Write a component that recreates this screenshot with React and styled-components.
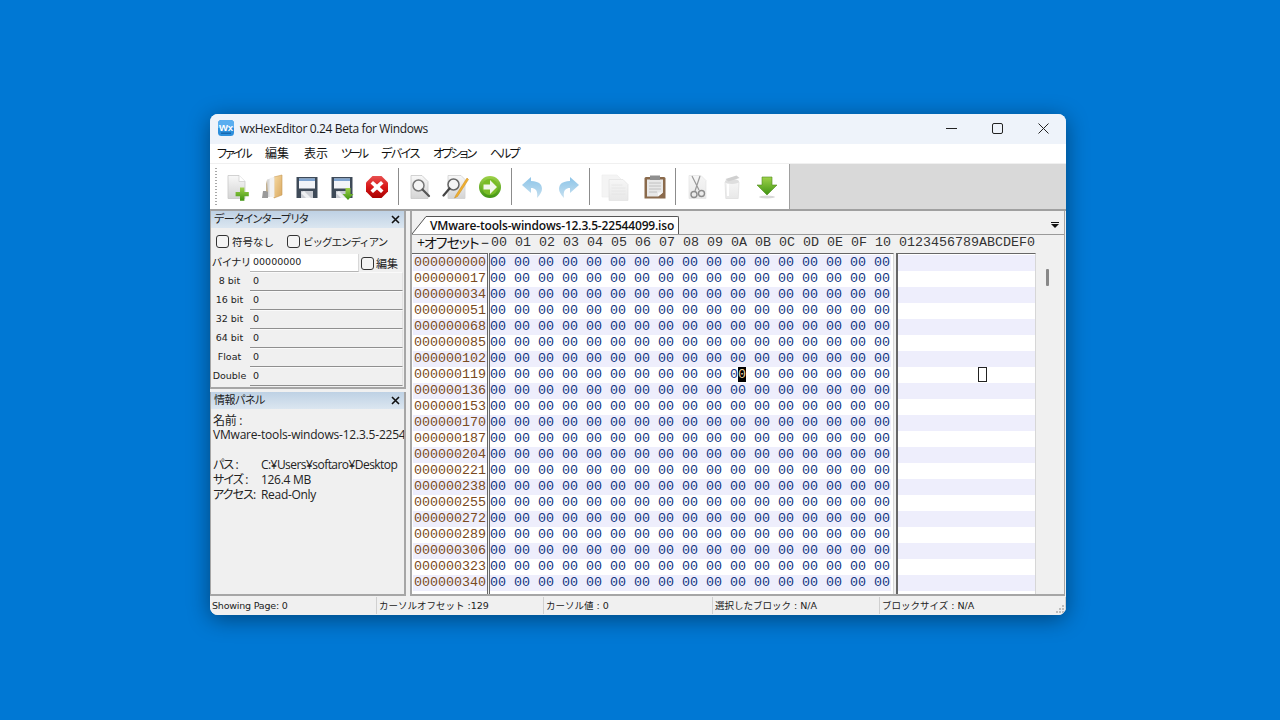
import React from "react";
import styled, { createGlobalStyle } from "styled-components";

const UI_FONT = `"Open Sans", "Noto Sans CJK JP", sans-serif`;
const SMALL_FONT = `"DejaVu Sans", "Noto Sans CJK JP", sans-serif`;
const HEX_FONT = `"Liberation Mono", monospace`;

const GlobalStyle = createGlobalStyle`
  html, body {
    margin: 0;
    height: 100%;
    background: #0078d4;
  }
  * {
    box-sizing: border-box;
  }
`;

const Page = styled.div`
  width: 1280px;
  height: 720px;
  padding: 114px 0 0 210px;
  overflow: hidden;
  background: #0078d4;
  font-family: ${UI_FONT};
  font-feature-settings: "palt";
`;

const Window = styled.div`
  width: 856px;
  height: 501px;
  display: flex;
  flex-direction: column;
  border-radius: 8px;
  overflow: hidden;
  background: #f0f0f0;
  box-shadow: 0 4px 22px rgba(0, 0, 0, 0.42);
`;

const TitleBar = styled.div`
  height: 30px;
  flex: none;
  display: flex;
  align-items: center;
  padding: 0 0 2px 8px;
  background: #eef3fa;
  color: #1a1a1a;
  font-size: 12px;
`;

const TitleText = styled.span`
  margin-left: 6px;
  flex: 1;
  letter-spacing: -0.36px;
`;

const CaptionButton = styled.div`
  width: 46px;
  height: 28px;
  display: flex;
  align-items: center;
  justify-content: center;
`;

const MenuBar = styled.div`
  height: 19px;
  flex: none;
  display: flex;
  align-items: center;
  padding: 0 0 2px 7px;
  background: #fff;
  color: #111;
  font-size: 12px;
`;

const MenuItem = styled.span`
  width: ${(p) => p.$width}px;
  flex: none;
  letter-spacing: ${(p) => p.$track}px;
  white-space: nowrap;
`;

const ToolArea = styled.div`
  height: 48px;
  flex: none;
  display: flex;
  background: #d9d9d9;
  border-top: 1px solid #f0f0f0;
  border-bottom: 2px solid #a0a0a0;
`;

const Toolbar = styled.div`
  width: 580px;
  display: flex;
  align-items: center;
  padding-left: 4px;
  background: #fff;
  border-right: 1px solid #a0a0a0;
`;

const Gripper = styled.div`
  width: 2px;
  height: 38px;
  margin: 0 2px 0 1px;
  background-image: linear-gradient(#a8a8a8 50%, transparent 50%);
  background-size: 2px 3px;
`;

const ToolSlot = styled.div`
  width: 35px;
  height: 28px;
  flex: none;
  margin-left: ${(p) => p.$left ?? 0}px;
  display: flex;
  align-items: center;
  justify-content: center;
  svg {
    filter: blur(0.3px);
  }
`;

const ToolSep = styled.div`
  width: 1px;
  height: 37px;
  margin: 0 ${(p) => p.$right ?? 3}px 0 ${(p) => p.$before ?? 4}px;
  flex: none;
  background: #8c8c8c;
`;

const Main = styled.div`
  flex: 1;
  min-height: 0;
  display: flex;
`;

const SidePanels = styled.div`
  width: 196px;
  margin-right: 4px;
  display: flex;
  flex-direction: column;
  gap: 3px;
`;

const Pane = styled.section`
  height: ${(p) => p.$height}px;
  flex: none;
  overflow: hidden;
  border: 1px solid #a6a6a6;
  border-width: 0 2px 2px 1px;
  background: #f0f0f0;
`;

const PaneHeader = styled.div`
  height: 17px;
  display: flex;
  align-items: center;
  justify-content: space-between;
  padding: 0 4px 0 3px;
  background: linear-gradient(#bed1e4, #dbe6f0);
  color: #222;
  font-size: 11px;
`;

const PaneTitle = styled.span`
  margin-top: -3px;
  letter-spacing: -0.45px;
`;

const CheckRow = styled.div`
  height: 26px;
  display: flex;
  align-items: center;
  padding-left: 5px;
  font-family: ${SMALL_FONT};
  font-size: 10.5px;
  color: #222;
`;

const CheckBox = styled.span`
  width: 13px;
  height: 13px;
  flex: none;
  margin-right: ${(p) => p.$gap ?? 3}px;
  border: 1px solid #333;
  border-radius: 3px;
  background: #f4f4f4;
`;

const CheckLabel = styled.span`
  margin-right: ${(p) => p.$gap ?? 0}px;
  font-feature-settings: normal;
  letter-spacing: ${(p) => p.$track ?? 0}px;
  white-space: nowrap;
`;

const FieldRow = styled.div`
  height: 19px;
  display: flex;
  align-items: stretch;
`;

const FieldLabel = styled.div`
  width: 39px;
  flex: none;
  padding-right: 2px;
  text-align: center;
  font-family: ${SMALL_FONT};
  font-size: 9.5px;
  line-height: 17px;
  color: #222;
  white-space: nowrap;
`;

const FieldValue = styled.div`
  width: 153px;
  padding-left: 3px;
  font-family: ${SMALL_FONT};
  font-size: 9.5px;
  line-height: 16px;
  color: #222;
  background: #f0f0f0;
  border-top: 1px solid #fafafa;
  border-bottom: 1px solid #8f8f8f;
  border-right: 1px solid #e2e2e2;
`;

const BinaryRow = styled(FieldRow)`
  height: 18px;
`;

const BinaryLabel = styled(FieldLabel)`
  padding: 0 0 0 1px;
  font-size: 10.5px;
  text-align: left;
  letter-spacing: 0.2px;
`;

const BinaryInput = styled(FieldValue)`
  width: 109px;
  flex: none;
  background: #fff;
  border-top: none;
  border-bottom: 1px solid #b5b5b5;
  border-right: 1px solid #d8d8d8;
`;

const BinaryEdit = styled.div`
  display: flex;
  align-items: center;
  padding-left: 2px;
  font-family: ${SMALL_FONT};
  font-size: 11px;
  color: #222;
`;

const InfoText = styled.div`
  padding: 4px 0 0 2px;
  font-size: 12px;
  line-height: 15px;
  color: #222;
  white-space: nowrap;
  overflow: hidden;
`;

const InfoLine = styled.div`
  display: flex;
  height: 15px;
  margin-bottom: ${(p) => p.$after ?? 0}px;
  letter-spacing: ${(p) => p.$track ?? -0.3}px;
`;

const InfoKey = styled.span`
  width: 48px;
  flex: none;
  letter-spacing: -0.9px;
`;

const Notebook = styled.div`
  width: 655px;
  display: flex;
  flex-direction: column;
  border: 1px solid #a6a6a6;
  border-width: 0 1px 2px 2px;
  position: relative;
`;

const TabStrip = styled.div`
  height: 24px;
  flex: none;
  display: flex;
  align-items: flex-end;
  border-bottom: 1px solid #9a9a9a;
`;

const TabSlant = styled.svg`
  flex: none;
  display: block;
`;

const Tab = styled.div`
  height: 18px;
  width: 252px;
  padding-left: 3px;
  background: #fff;
  border: 1px solid #555;
  border-width: 1px 1px 0 0;
  border-radius: 0 2px 0 0;
  color: #111;
  font-size: 12px;
  font-weight: 600;
  line-height: 17px;
  letter-spacing: -0.18px;
  white-space: nowrap;
`;

const TabMenu = styled.div`
  position: absolute;
  right: 5px;
  top: 11px;
  width: 8px;
  height: 6px;
  border-top: 1px solid #111;
  &::after {
    content: "";
    display: block;
    margin-top: 1px;
    border: 4px solid transparent;
    border-top: 4px solid #111;
    border-bottom: 0;
  }
`;

const GridColumns = `
  display: grid;
  grid-template-columns: 77px 409px 139px 1fr;
`;

const ColumnHeader = styled.div`
  ${GridColumns}
  height: 18px;
  flex: none;
  align-items: center;
  padding-bottom: 4px;
  font-family: ${HEX_FONT};
  font-size: 13.33px;
  color: #333;
  background: #f0f0f0;
`;

const OffsetTitle = styled.span`
  padding-left: 5px;
  font-family: ${UI_FONT};
  font-size: 14px;
  line-height: 14px;
  letter-spacing: -1px;
  color: #111;
  white-space: nowrap;
`;

const MonoLabel = styled.span`
  padding-left: ${(p) => p.$left}px;
  white-space: pre;
`;

const Panes = styled.div`
  ${GridColumns}
  flex: 1;
  min-height: 0;
  font-family: ${HEX_FONT};
  font-size: 13.33px;
  line-height: 16px;
`;

const Column = styled.div`
  height: 100%;
  padding-top: 1px;
  background: #fff;
  border-top: 1px solid #666;
  border-left: 1px solid #666;
  border-right: 1px solid #d6d6d6;
  overflow: hidden;
`;

const OffsetColumn = styled(Column)`
  margin-right: 1px;
  padding-left: 1px;
  border-left: none;
  border-right: 1px solid #666;
`;

const HexColumn = styled(Column)`
  width: 405px;
`;

const TextColumn = styled(Column)`
  margin-left: -2px;
  width: 140px;
  border-left-width: 2px;
`;

const Row = styled.div`
  height: 16px;
  white-space: pre;
  background: ${(p) => (p.$band ? "#eeeefc" : "#fff")};
  color: ${(p) => p.$color};
`;

const OffsetRow = styled(Row)`
  padding-left: 1px;
`;

const BytesRow = styled(Row)`
  width: 401px;
`;

const Cursor = styled.span`
  background: #000;
  color: #f0d8a0;
`;

const TextCursor = styled.span`
  display: block;
  width: 9px;
  height: 15px;
  margin-left: 80px;
  border: 1.5px solid #222;
`;

const ScrollTrack = styled.div`
  padding: 16px 0 0 9px;
`;

const ScrollThumb = styled.div`
  width: 3px;
  height: 17px;
  border-radius: 1px;
  background: #888;
`;

const StatusBar = styled.div`
  height: 19px;
  flex: none;
  display: flex;
  align-items: center;
  position: relative;
  background: #f0f0f0;
  font-family: ${SMALL_FONT};
  font-size: 9.5px;
  font-feature-settings: normal;
  color: #222;
`;

const StatusField = styled.div`
  width: ${(p) => p.$width}px;
  height: 17px;
  flex: none;
  padding-left: 2px;
  line-height: 18px;
  letter-spacing: ${(p) => p.$track ?? 0}px;
  border-right: 1px solid #d0d0d0;
  white-space: nowrap;
`;

const Grip = styled.svg`
  position: absolute;
  right: 1px;
  bottom: 1px;
`;

// --- toolbar drawings ---

const Defs = () => (
  <svg width="0" height="0" style={{ position: "absolute" }}>
    <defs>
      <linearGradient id="paper" x1="0" y1="0" x2="0" y2="1">
        <stop offset="0" stopColor="#f8f8f8" />
        <stop offset="1" stopColor="#d4d4d4" />
      </linearGradient>
      <linearGradient id="pale" x1="0" y1="0" x2="0" y2="1">
        <stop offset="0" stopColor="#f6f6f6" />
        <stop offset="1" stopColor="#e8e8e8" />
      </linearGradient>
      <linearGradient id="green" x1="0" y1="0" x2="0" y2="1">
        <stop offset="0" stopColor="#9fd24a" />
        <stop offset="1" stopColor="#3f9412" />
      </linearGradient>
      <linearGradient id="red" x1="0" y1="0" x2="0" y2="1">
        <stop offset="0" stopColor="#e85050" />
        <stop offset="0.5" stopColor="#d81818" />
        <stop offset="1" stopColor="#a80000" />
      </linearGradient>
      <linearGradient id="folder" x1="0" y1="0" x2="1" y2="1">
        <stop offset="0" stopColor="#f6d9a0" />
        <stop offset="1" stopColor="#d9a860" />
      </linearGradient>
      <linearGradient id="arrow" x1="0" y1="0" x2="0" y2="1">
        <stop offset="0" stopColor="#8cc4e8" />
        <stop offset="1" stopColor="#c6e0f0" />
      </linearGradient>
    </defs>
  </svg>
);

const Ico = ({ left, children }) => (
  <ToolSlot $left={left}>
    <svg width="28" height="28" viewBox="0 0 28 28">
      {children}
    </svg>
  </ToolSlot>
);

const PageShape = ({ fill = "url(#paper)", stroke = "#c8c8c8" }) => (
  <path d="M5 2.5h11l6 6v17H5z" fill={fill} stroke={stroke} strokeWidth="0.8" />
);

const Floppy = () => (
  <>
    <path d="M3.5 4h21v21h-21z" fill="#3e4a58" />
    <path d="M6 5.5h16v10H6z" fill="#f2f4f8" />
    <path d="M6 5.5h16v2.5H6z" fill="#7fa4d0" />
    <path d="M8 18h12v7H8z" fill="#c9ccd2" />
    <path d="M11 18l7 7h-5l-5-5z" fill="#eef0f2" />
  </>
);

const NewIcon = () => (
  <Ico>
    <PageShape />
    <path d="M16 2.5v6h6" fill="#fff" stroke="#d0d0d0" strokeWidth="0.8" />
    <path d="M17 14.5h4.4v4.4h4.4v4.4h-4.4v4.4H17v-4.4h-4.4v-4.4H17z" fill="url(#green)" />
  </Ico>
);

const OpenIcon = () => (
  <Ico>
    <path d="M16 4l8-2v20l-8 3z" fill="url(#folder)" stroke="#c89a58" strokeWidth="0.6" />
    <path d="M9 6.5l7-1.5v19H9z" fill="#d8d8d8" />
    <path d="M11.5 5l5-1v20h-5z" fill="#f2f2f2" />
    <path d="M5 18h5v7H4z" fill="#9a9a9a" />
    <path d="M9 7l-1 4v7l2 1z" fill="#c2b090" />
  </Ico>
);

const SaveIcon = () => (
  <Ico>
    <Floppy />
  </Ico>
);

const SaveAsIcon = () => (
  <Ico>
    <Floppy />
    <path d="M17.5 15h5v6h3l-5.5 6-5.5-6h3z" fill="url(#green)" />
  </Ico>
);

const StopIcon = () => (
  <Ico>
    <path d="M9.5 3h9L25 9.5v9L18.5 25h-9L3 18.5v-9z" fill="url(#red)" />
    <path d="M10 8l4 3.5L18 8l2.5 2.5-3.7 3.5 3.7 3.5L18 20l-4-3.5L10 20l-2.5-2.5 3.7-3.5-3.7-3.5z" fill="#fff" />
  </Ico>
);

const FindIcon = () => (
  <Ico>
    <PageShape />
    <circle cx="12.5" cy="12.5" r="5.5" fill="#f4f4f4" stroke="#777" strokeWidth="1.5" />
    <path d="M16.5 16.5l6.5 6.5" stroke="#555" strokeWidth="2.2" strokeLinecap="round" />
  </Ico>
);

const ReplaceIcon = () => (
  <Ico>
    <path d="M7 2.5h13l4 4v19H7z" fill="url(#paper)" stroke="#d0d0d0" strokeWidth="0.8" />
    <circle cx="12.5" cy="11.5" r="5.5" fill="#f4f4f4" stroke="#666" strokeWidth="1.5" />
    <path d="M8.5 15.5L2.5 22.5" stroke="#444" strokeWidth="2.2" strokeLinecap="round" />
    <path d="M26 5L15 22l-1.5 3 3-1.5L27.5 6.5z" fill="#f0b030" stroke="#c88818" strokeWidth="0.5" />
  </Ico>
);

const GoIcon = () => (
  <Ico>
    <circle cx="14" cy="14" r="11" fill="url(#green)" />
    <circle cx="14" cy="14" r="8" fill="#79bc26" />
    <path d="M7.5 11.5h6.5V7l7 7-7 7v-4.5H7.5z" fill="#f2f7ec" />
  </Ico>
);

const UndoIcon = ({ flip }) => (
  <Ico>
    <g transform={flip ? "translate(28,0) scale(-1,1)" : undefined}>
      <path d="M12 4L3 12l9 8v-5c5 0 7 3 6 10 5-5 6-9 4-13-2-3-6-4-10-4z" fill="url(#arrow)" />
    </g>
  </Ico>
);

const CopyIcon = () => (
  <Ico>
    <path d="M1 2h15l4 4v18H1z" fill="#f4f4f4" stroke="#eeeeee" strokeWidth="0.7" />
    <path d="M8 6.5h14l5 5v16H8z" fill="url(#pale)" stroke="#e2e2e2" strokeWidth="0.7" />
    <path d="M10.5 12h11M10.5 15h14M10.5 18h14M10.5 21h14" stroke="#e4e4e4" strokeWidth="0.8" />
  </Ico>
);

const PasteIcon = ({ left }) => (
  <Ico left={left}>
    <path d="M5 4h18a1.5 1.5 0 0 1 1.5 1.5V25.5H3.5V5.5A1.5 1.5 0 0 1 5 4z" fill="#8a6a4c" />
    <path d="M6 6.5h16v13l-5 4H6z" fill="#e8e8e8" />
    <path d="M8 10h12M8 13h12M8 16h12M8 19h8" stroke="#bdbdbd" strokeWidth="0.9" />
    <path d="M9 2.5h10v4.5H9z" fill="#8f8f8f" />
    <path d="M17 23.5l5-4h-5z" fill="#f8f8f8" />
  </Ico>
);

const CutIcon = () => (
  <Ico>
    <path d="M6 2.5h12l5 5V25.5H6z" fill="url(#pale)" stroke="#e4e4e4" strokeWidth="0.7" />
    <path d="M9 3l7 14M17 3l-5 15" stroke="#9a9a9a" strokeWidth="1.2" />
    <circle cx="11" cy="21.5" r="3" fill="none" stroke="#8c8c8c" strokeWidth="1.4" />
    <circle cx="18.5" cy="20.5" r="3" fill="none" stroke="#8c8c8c" strokeWidth="1.4" />
  </Ico>
);

const TrashIcon = () => (
  <Ico>
    <path d="M7 9h14l-.8 16.5H7.8z" fill="url(#pale)" stroke="#dcdcdc" strokeWidth="0.7" />
    <ellipse cx="14" cy="8.5" rx="7" ry="2.5" fill="#dedede" />
    <path d="M7.5 6l11-3.5 3 2.5-11 3.5z" fill="#d0d0d0" />
    <path d="M10 11v12" stroke="#fff" strokeWidth="2" />
  </Ico>
);

const DownIcon = () => (
  <Ico>
    <ellipse cx="14" cy="24" rx="8" ry="1.5" fill="#d8d8d8" />
    <path d="M9 4h10v8h5L14 22 4 12h5z" fill="url(#green)" stroke="#4f8c1c" strokeWidth="0.6" />
  </Ico>
);

const AppLogo = () => (
  <svg width="16" height="16" viewBox="0 0 16 16">
    <rect width="16" height="16" rx="3.5" fill="#2d8fdc" />
    <path d="M0 3.5A3.5 3.5 0 0 1 3.5 0h9A3.5 3.5 0 0 1 16 3.5V8H0z" fill="#5aaef0" />
    <text x="8" y="10.5" textAnchor="middle" fontFamily="Liberation Sans" fontWeight="700" fontSize="9.5" fill="#fff">
      Wx
    </text>
    <rect x="3" y="12.5" width="10" height="1.5" fill="#1668b0" />
  </svg>
);

const CloseX = () => (
  <svg width="9" height="9" viewBox="0 0 9 9">
    <path d="M1 1l7 7M8 1L1 8" stroke="#111" strokeWidth="1.6" />
  </svg>
);

// --- data ---

const ROWS = Array.from({ length: 21 }, (_, i) => i);
const HEADINGS = Array.from({ length: 17 }, (_, i) =>
  i.toString(16).toUpperCase().padStart(2, "0")
).join(" ");
const ZEROS = Array.from({ length: 17 }, () => "00").join(" ");
const FIELDS = ["8 bit", "16 bit", "32 bit", "64 bit", "Float", "Double"];
const MENUS = [
  ["ファイル", 48, -2],
  ["編集", 39, 0],
  ["表示", 37, 0],
  ["ツール", 40, -3],
  ["デバイス", 52, -1.4],
  ["オプション", 57, -2.2],
  ["ヘルプ", 40, -2],
];

const HEX_COLOR = "#12357f";
const OFFSET_COLOR = "#7a4a20";

const HexRow = ({ index }) => {
  if (index !== 7) {
    return (
      <BytesRow $band={index % 2 === 0} $color={HEX_COLOR}>
        {ZEROS}
      </BytesRow>
    );
  }
  return (
    <BytesRow $color={HEX_COLOR}>
      {ZEROS.slice(0, 31)}
      <Cursor>0</Cursor>
      {ZEROS.slice(32)}
    </BytesRow>
  );
};

const App = () => (
  <Page>
    <GlobalStyle />
    <Defs />
    <Window>
      <TitleBar>
        <AppLogo />
        <TitleText>wxHexEditor 0.24 Beta for Windows</TitleText>
        <CaptionButton>
          <svg width="11" height="11" viewBox="0 0 11 11">
            <path d="M0 5.5h11" stroke="#222" strokeWidth="1" />
          </svg>
        </CaptionButton>
        <CaptionButton>
          <svg width="11" height="11" viewBox="0 0 11 11">
            <rect x="0.5" y="0.5" width="10" height="10" rx="1.5" fill="none" stroke="#222" />
          </svg>
        </CaptionButton>
        <CaptionButton>
          <svg width="11" height="11" viewBox="0 0 11 11">
            <path d="M0.5 0.5l10 10M10.5 0.5l-10 10" stroke="#222" strokeWidth="1" />
          </svg>
        </CaptionButton>
      </TitleBar>

      <MenuBar>
        {MENUS.map(([label, width, track]) => (
          <MenuItem key={label} $width={width} $track={track}>
            {label}
          </MenuItem>
        ))}
      </MenuBar>

      <ToolArea>
        <Toolbar>
          <Gripper />
          <NewIcon />
          <OpenIcon />
          <SaveIcon />
          <SaveAsIcon />
          <StopIcon />
          <ToolSep />
          <FindIcon />
          <ReplaceIcon />
          <GoIcon />
          <ToolSep />
          <UndoIcon />
          <UndoIcon flip />
          <ToolSep $right={7} />
          <CopyIcon />
          <PasteIcon left={5} />
          <ToolSep $before={3} />
          <CutIcon />
          <TrashIcon />
          <DownIcon />
        </Toolbar>
      </ToolArea>

      <Main>
        <SidePanels>
          <Pane $height={178}>
            <PaneHeader>
              <PaneTitle>データインタープリタ</PaneTitle>
              <CloseX />
            </PaneHeader>
            <CheckRow>
              <CheckBox />
              <CheckLabel $gap={13}>符号なし</CheckLabel>
              <CheckBox />
              <CheckLabel $track={-1}>ビッグエンディアン</CheckLabel>
            </CheckRow>
            <BinaryRow>
              <BinaryLabel>バイナリ</BinaryLabel>
              <BinaryInput>00000000</BinaryInput>
              <BinaryEdit>
                <CheckBox $gap={2} />
                編集
              </BinaryEdit>
            </BinaryRow>
            {FIELDS.map((name) => (
              <FieldRow key={name}>
                <FieldLabel>{name}</FieldLabel>
                <FieldValue>0</FieldValue>
              </FieldRow>
            ))}
          </Pane>
          <Pane $height={204}>
            <PaneHeader>
              <PaneTitle>情報パネル</PaneTitle>
              <CloseX />
            </PaneHeader>
            <InfoText>
              <InfoLine $after={-1}>名前 :</InfoLine>
              <InfoLine $after={15} $track={-0.2}>VMware-tools-windows-12.3.5-22544099.iso</InfoLine>
              <InfoLine $track={-0.55}>
                <InfoKey>パス :</InfoKey>C:¥Users¥softaro¥Desktop
              </InfoLine>
              <InfoLine>
                <InfoKey>サイズ :</InfoKey>126.4 MB
              </InfoLine>
              <InfoLine>
                <InfoKey>アクセス:</InfoKey>Read-Only
              </InfoLine>
            </InfoText>
          </Pane>
        </SidePanels>

        <Notebook>
          <TabStrip>
            <TabSlant width="15" height="18" viewBox="0 0 15 18">
              <path d="M0 18L14 1h1v17z" fill="#fff" />
              <path d="M0 18L14 0.5h1" fill="none" stroke="#555" />
            </TabSlant>
            <Tab>VMware-tools-windows-12.3.5-22544099.iso</Tab>
          </TabStrip>
          <TabMenu />
          <ColumnHeader>
            <OffsetTitle>+オフセット −</OffsetTitle>
            <MonoLabel $left={2}>{HEADINGS}</MonoLabel>
            <MonoLabel $left={1}>0123456789ABCDEF0</MonoLabel>
          </ColumnHeader>
          <Panes>
            <OffsetColumn>
              {ROWS.map((i) => (
                <OffsetRow key={i} $band={i % 2 === 0} $color={OFFSET_COLOR}>
                  {String(i * 17).padStart(9, "0")}
                </OffsetRow>
              ))}
            </OffsetColumn>
            <HexColumn>
              {ROWS.map((i) => (
                <HexRow key={i} index={i} />
              ))}
            </HexColumn>
            <TextColumn>
              {ROWS.map((i) => (
                <Row key={i} $band={i % 2 === 0}>
                  {i === 7 && <TextCursor />}
                </Row>
              ))}
            </TextColumn>
            <ScrollTrack>
              <ScrollThumb />
            </ScrollTrack>
          </Panes>
        </Notebook>
      </Main>

      <StatusBar>
        <StatusField $width={167} $track={-0.2}>Showing Page: 0</StatusField>
        <StatusField $width={167}>カーソルオフセット :129</StatusField>
        <StatusField $width={169}>カーソル値 : 0</StatusField>
        <StatusField $width={167}>選択したブロック : N/A</StatusField>
        <StatusField $width={186}>ブロックサイズ : N/A</StatusField>
        <Grip width="10" height="10" viewBox="0 0 10 10">
          <path d="M7 1h2v2H7zM4 4h2v2H4zM7 4h2v2H7zM1 7h2v2H1zM4 7h2v2H4zM7 7h2v2H7z" fill="#bdbdbd" />
        </Grip>
      </StatusBar>
    </Window>
  </Page>
);

export default App;
